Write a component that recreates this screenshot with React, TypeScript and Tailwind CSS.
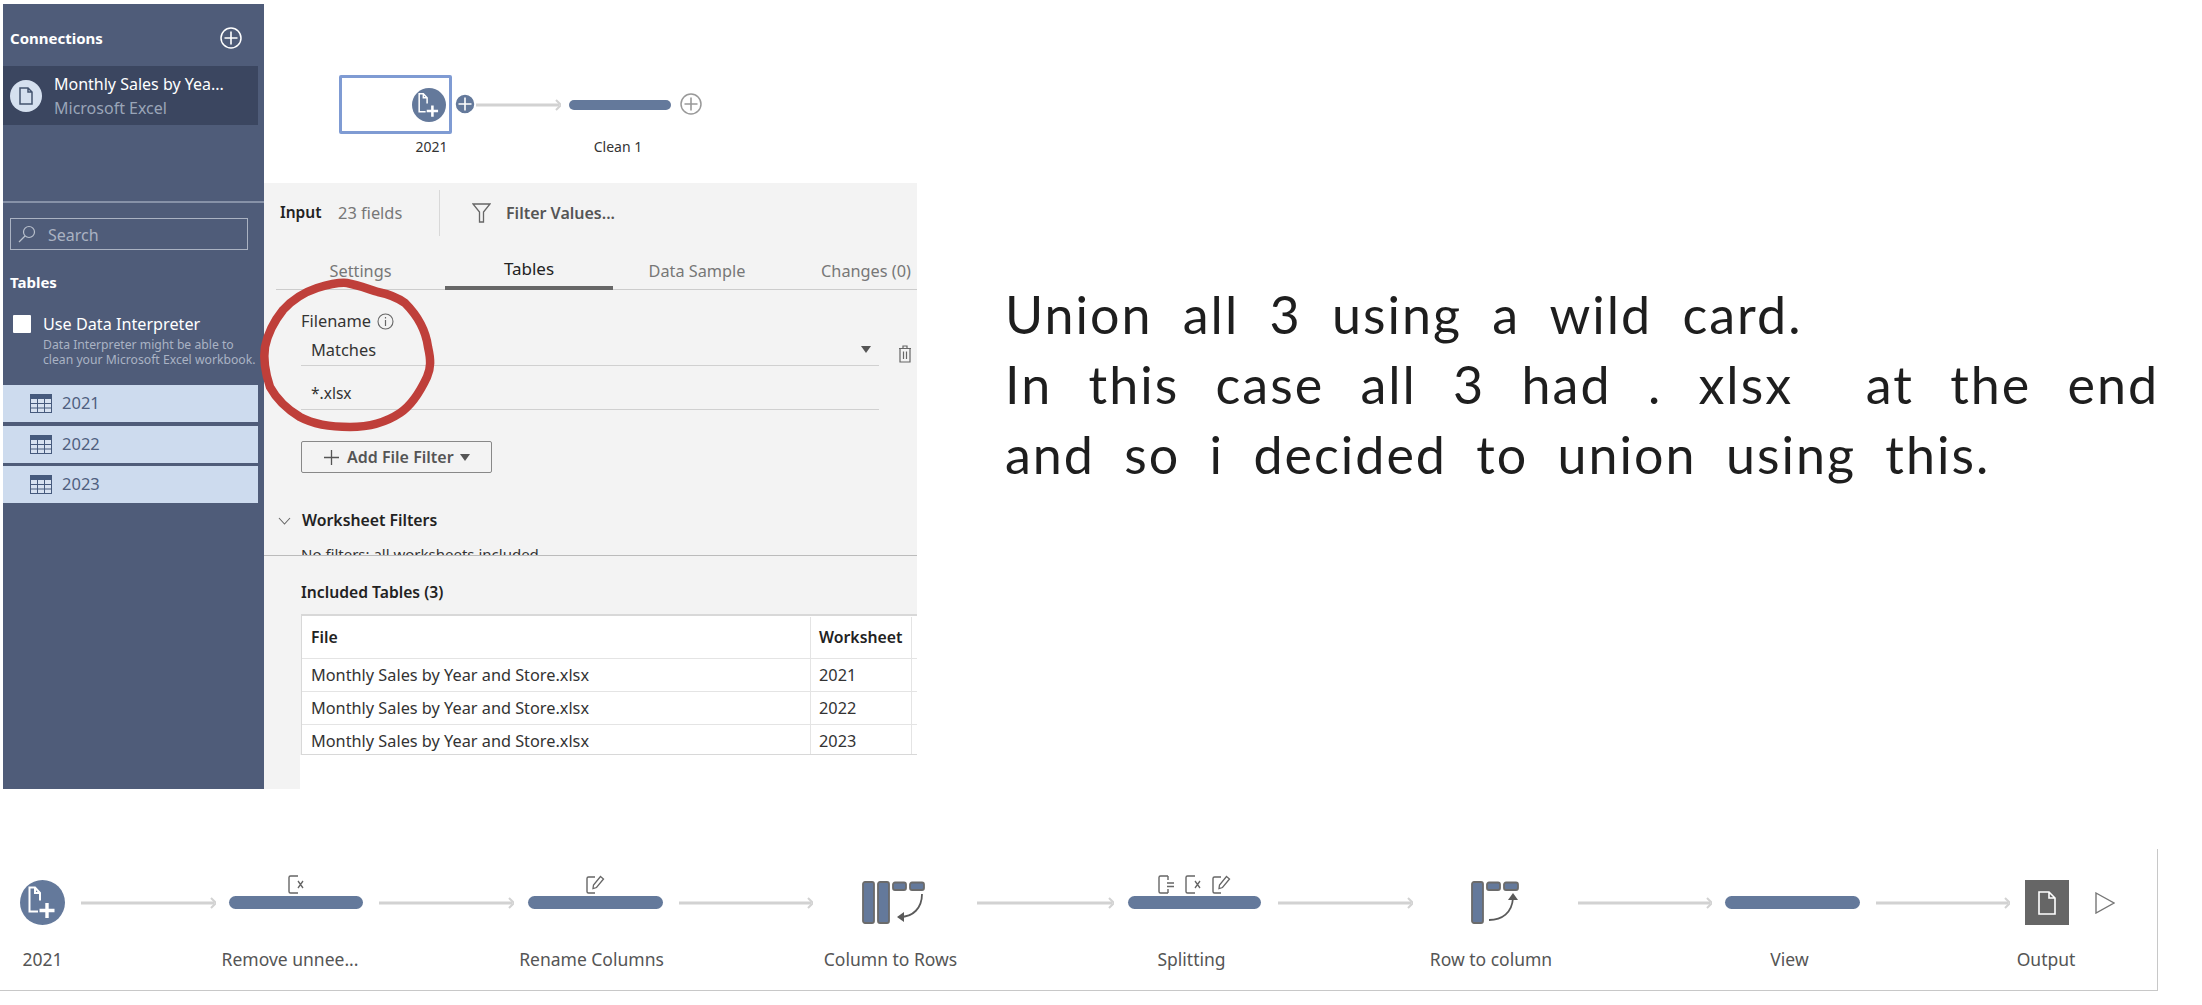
import React from "react";

const BLUE = "#64799b";

function PlusCircle({ size = 22, fill = "none", stroke = "#fff" }: { size?: number; fill?: string; stroke?: string }) {
  return (
    <svg width={size} height={size} viewBox="0 0 22 22" className="shrink-0">
      <circle cx="11" cy="11" r="10" fill={fill} stroke={stroke} strokeWidth="1.5" />
      <path d="M11 4.5v13M4.5 11h13" stroke={stroke} strokeWidth="1.6" />
    </svg>
  );
}

function FileAdd({ size }: { size: number }) {
  return (
    <svg width={size} height={size} viewBox="0 0 45 45" className="shrink-0">
      <circle cx="22.5" cy="22.5" r="22.5" fill={BLUE} />
      <path d="M20 20.5V13l-5-5.5H9.5v24H18M15 7.5V13h5" fill="none" stroke="#fff" strokeWidth="2" />
      <path d="M27 23v15M19.5 30.5h15" stroke="#fff" strokeWidth="3.4" />
    </svg>
  );
}

function Arrow({ w }: { w: number }) {
  return (
    <svg width={w} height="14" viewBox={`0 0 ${w} 14`} className="shrink-0">
      <path d={`M0 7H${w - 2}`} stroke="#d2d2d2" strokeWidth="3.2" />
      <path d={`M${w - 5} 2l5 5-5 5`} fill="none" stroke="#d2d2d2" strokeWidth="2" />
    </svg>
  );
}

function DocX() {
  return (
    <svg width="17" height="19" viewBox="0 0 17 19" className="shrink-0">
      <path d="M10 1H2.5A1.5 1.5 0 0 0 1 2.5v14A1.5 1.5 0 0 0 2.5 18H10" fill="none" stroke="#666" strokeWidth="1.4" />
      <path d="M10 6l5 7M15 6l-5 7" stroke="#666" strokeWidth="1.3" />
    </svg>
  );
}
function DocEdit() {
  return (
    <svg width="19" height="19" viewBox="0 0 19 19" className="shrink-0">
      <path d="M9 2H2.5A1.5 1.5 0 0 0 1 3.5v13A1.5 1.5 0 0 0 2.5 18H9" fill="none" stroke="#666" strokeWidth="1.4" />
      <path d="M14.5 1.5l3 2.5-7 8.5-3.5 1 .5-3.5z" fill="none" stroke="#666" strokeWidth="1.3" />
    </svg>
  );
}
function DocLines() {
  return (
    <svg width="17" height="19" viewBox="0 0 17 19" className="shrink-0">
      <path d="M10 1H2.5A1.5 1.5 0 0 0 1 2.5v14A1.5 1.5 0 0 0 2.5 18H10" fill="none" stroke="#666" strokeWidth="1.4" />
      <path d="M10 1v4M10 14v4M9 8h7M9 11.5h7" stroke="#666" strokeWidth="1.4" />
    </svg>
  );
}

function ColsToRows() {
  return (
    <svg width="63" height="43" viewBox="0 0 63 43" className="shrink-0">
      <rect x="1" y="1" width="11" height="41" rx="2" fill={BLUE} stroke="#6b6b6b" strokeWidth="1.8" />
      <rect x="16" y="1" width="11" height="41" rx="2" fill={BLUE} stroke="#6b6b6b" strokeWidth="1.8" />
      <rect x="31" y="1.5" width="13" height="7.5" rx="2" fill={BLUE} stroke="#6b6b6b" strokeWidth="1.8" />
      <rect x="48" y="1.5" width="14" height="7.5" rx="2" fill={BLUE} stroke="#6b6b6b" strokeWidth="1.8" />
      <path d="M60 13c0 14-9 23-22 23" fill="none" stroke="#5a5a5a" strokeWidth="1.8" />
      <path d="M35 36l7-5v10z" fill="#5a5a5a" />
    </svg>
  );
}

function RowsToCols() {
  return (
    <svg width="48" height="43" viewBox="0 0 48 43" className="shrink-0">
      <rect x="1" y="1" width="11" height="41" rx="2" fill={BLUE} stroke="#6b6b6b" strokeWidth="1.8" />
      <rect x="16" y="1.5" width="13" height="7.5" rx="2" fill={BLUE} stroke="#6b6b6b" strokeWidth="1.8" />
      <rect x="33" y="1.5" width="14" height="7.5" rx="2" fill={BLUE} stroke="#6b6b6b" strokeWidth="1.8" />
      <path d="M18 39c13 0 23-7 24-22" fill="none" stroke="#5a5a5a" strokeWidth="1.8" />
      <path d="M42 12l5 7H37z" fill="#5a5a5a" />
    </svg>
  );
}

function Pill({ w, icons }: { w: number; icons?: React.ReactNode }) {
  return (
    <div className="relative h-[13px] rounded-full bg-[#64799b]" style={{ width: w }}>
      {icons && <div className="absolute bottom-[15px] left-0 right-0 flex items-center justify-center gap-[10px]">{icons}</div>}
    </div>
  );
}

function Node({ label, w, dx = 0, children }: { label: string; w: number; dx?: number; children: React.ReactNode }) {
  return (
    <div className="flex shrink-0 flex-col items-center" style={{ width: w }}>
      <div className="flex h-[45px] items-center">{children}</div>
      <div className="mt-[22px] h-[24px] whitespace-nowrap text-[17.5px] leading-[24px] text-[#555]" style={{ marginLeft: dx * 2 }}>
        {label}
      </div>
    </div>
  );
}

function Link({ w, ml }: { w: number; ml: number }) {
  return (
    <div className="flex h-[45px] shrink-0 items-center" style={{ width: w, marginLeft: ml }}>
      <Arrow w={w} />
    </div>
  );
}

function TableIcon() {
  return (
    <svg width="22" height="19" viewBox="0 0 22 19" className="shrink-0">
      <rect x="0.5" y="0.5" width="21" height="18" fill="#d8e2f1" stroke="#465a7d" />
      <rect x="0.5" y="0.5" width="21" height="4.5" fill="#465a7d" />
      <path d="M0 9.5h22M0 14h22M7.5 5v14M14.5 5v14" stroke="#465a7d" strokeWidth="1" />
    </svg>
  );
}

function TableRow({ year }: { year: string }) {
  return (
    <div className="flex h-[37px] w-[255px] items-center bg-[#cddbee] pl-[27px] text-[16.5px] text-[#4f5f7f]">
      <TableIcon />
      <span className="ml-[10px]">{year}</span>
    </div>
  );
}

function Sidebar() {
  return (
    <aside className="flex h-[785px] w-[261px] shrink-0 flex-col bg-[#4f5c79]">
      <div className="flex h-[62px] items-center justify-between pl-[7px] pr-[22px] pt-[6px]">
        <span className="text-[15px] font-bold text-white">Connections</span>
        <PlusCircle />
      </div>
      <div className="flex h-[59px] w-[255px] items-center bg-[#3b4660] pl-[7px]">
        <div className="flex h-[32px] w-[32px] items-center justify-center rounded-full bg-[#d5e0ef]">
          <svg width="14" height="18" viewBox="0 0 14 18">
            <path d="M1 1h8l4 4v12H1zM9 1v4h4" fill="none" stroke="#43536f" strokeWidth="1.5" />
          </svg>
        </div>
        <div className="ml-[12px] flex flex-col">
          <span className="text-[16px] leading-[24px] text-white">Monthly Sales by Yea...</span>
          <span className="text-[16px] leading-[24px] text-[#9aa5b8]">Microsoft Excel</span>
        </div>
      </div>
      <div className="mt-[76px] h-[2px] bg-[#8792a8]" />
      <div className="ml-[7px] mt-[15px] flex h-[32px] w-[238px] items-center border border-[#aab2c2] pl-[7px]">
        <svg width="18" height="18" viewBox="0 0 18 18" className="shrink-0">
          <circle cx="11" cy="7" r="5.5" fill="none" stroke="#b9c0cd" strokeWidth="1.2" />
          <path d="M7 11l-6 6" stroke="#b9c0cd" strokeWidth="1.2" />
        </svg>
        <span className="ml-[12px] pt-[2px] text-[16px] leading-[22px] text-[#aab2c2]">Search</span>
      </div>
      <div className="ml-[7px] mt-[21px] text-[15px] font-bold leading-[22px] text-white">Tables</div>
      <div className="ml-[10px] mt-[22px] flex items-center">
        <div className="h-[18px] w-[18px] rounded-[1px] bg-white" />
        <span className="ml-[12px] text-[16.2px] leading-[18px] text-white">Use Data Interpreter</span>
      </div>
      <div className="ml-[40px] mt-[5px] whitespace-nowrap text-[12.2px] leading-[14.5px] text-[#aab3c4]">
        Data Interpreter might be able to
        <br />
        clean your Microsoft Excel workbook.
      </div>
      <div className="mt-[18px] flex flex-col gap-[3.5px]">
        <TableRow year="2021" />
        <TableRow year="2022" />
        <TableRow year="2023" />
      </div>
    </aside>
  );
}

function Canvas() {
  return (
    <div className="flex h-[179px] items-start pl-[75px] pt-[71px]">
      <div className="flex flex-col">
        <div className="flex h-[59px] w-[113px] items-center justify-end rounded-[2px] border-[3px] border-[#7f9bd3] bg-white pr-[3px]">
          <FileAdd size={34} />
        </div>
        <div className="mt-[4px] pl-[72px] text-center text-[14px] leading-[18px] text-[#333]">2021</div>
      </div>
      <div className="flex h-[59px] items-center">
        <div className="mb-[2px] ml-[2px]">
          <PlusCircle fill={BLUE} stroke="#fff" />
        </div>
        <Arrow w={85} />
      </div>
      <div className="ml-[8px] flex w-[102px] flex-col items-center">
        <div className="flex h-[59px] items-center">
          <div className="h-[10px] w-[102px] rounded-full bg-[#64799b]" />
        </div>
        <div className="mt-[4px] pr-[4px] text-[14px] leading-[18px] text-[#333]">Clean 1</div>
      </div>
      <div className="mb-[2px] ml-[9px] flex h-[57px] items-center">
        <PlusCircle fill="#fff" stroke="#999" />
      </div>
    </div>
  );
}

function Tab({ label, w, active }: { label: string; w: number; active?: boolean }) {
  return (
    <div
      className={`flex h-[38px] shrink-0 items-center justify-center whitespace-nowrap ${
        active ? "border-b-[4px] border-[#666] text-[17px] text-[#222]" : "pt-[1px] text-[16.3px] text-[#777]"
      }`}
      style={{ width: w }}
    >
      {label}
    </div>
  );
}

function Tri({ className = "" }: { className?: string }) {
  return (
    <svg width="10" height="7" viewBox="0 0 10 7" className={`shrink-0 ${className}`}>
      <path d="M0 0h10L5 7z" fill="#555" />
    </svg>
  );
}

function Row({ year, head }: { year: string; head?: string }) {
  return (
    <div className={`flex border-b border-[#e4e4e4] ${head ? "h-[43px] pt-[1px] text-[15.8px] font-semibold text-[#222]" : "h-[33px] text-[16.3px] text-[#333]"}`}>
      <div className="flex w-[509px] shrink-0 items-center border-r border-[#e4e4e4] pl-[9px]">
        {head ?? "Monthly Sales by Year and Store.xlsx"}
      </div>
      <div className="flex w-[101px] shrink-0 items-center border-r border-[#e4e4e4] pl-[8px]">{year}</div>
    </div>
  );
}

function Panel() {
  return (
    <div className="flex w-[653px] flex-col">
      <div className="h-[373px] overflow-hidden border-b border-[#bbb] bg-[#f3f3f3]">
        <div className="flex h-[60px] items-center pl-[16px]">
          <span className="w-[58px] text-[15.5px] font-semibold text-[#222]">Input</span>
          <span className="w-[101px] text-[16.4px] text-[#777]">23 fields</span>
          <div className="h-[46px] w-px bg-[#d8d8d8]" />
          <svg width="19" height="20" viewBox="0 0 19 20" className="ml-[32px] shrink-0">
            <path d="M1 1h17l-6.5 8v10h-4V9z" fill="none" stroke="#666" strokeWidth="1.3" />
          </svg>
          <span className="ml-[15px] text-[16px] font-semibold text-[#555]">Filter Values...</span>
        </div>
        <div className="ml-[12px] mt-[9px] flex h-[38px] border-b border-[#ccc]">
          <Tab label="Settings" w={169} />
          <Tab label="Tables" w={168} active />
          <Tab label="Data Sample" w={168} />
          <Tab label="Changes (0)" w={170} />
        </div>
        <div className="ml-[37px] mt-[21px] flex h-[20px] items-center text-[16.4px] text-[#333]">
          Filename
          <svg width="17" height="17" viewBox="0 0 17 17" className="ml-[6px]">
            <circle cx="8.5" cy="8.5" r="7.5" fill="none" stroke="#666" strokeWidth="1.1" />
            <path d="M8.5 7v6M8.5 4v1.6" stroke="#666" strokeWidth="1.2" />
          </svg>
        </div>
        <div className="mt-[3px] flex items-start">
          <div className="ml-[37px] w-[578px]">
            <div className="flex h-[32px] items-center border-b border-[#d0d0d0] pl-[10px] pr-[8px] text-[16.4px] text-[#333]">
              <span className="flex-1 pb-[1px] pt-[2px]">Matches</span>
              <Tri />
            </div>
            <div className="mt-[12px] flex h-[32px] items-center border-b border-[#d0d0d0] pl-[10px] text-[15.5px] text-[#333]">*.xlsx</div>
          </div>
          <svg width="14" height="18" viewBox="0 0 14 18" className="ml-[19px] mt-[11px] shrink-0">
            <path d="M1 3.5h12M5 3.5V1h4v2.5M2 3.5V17h10V3.5M5.5 6.5v7.5M8.5 6.5v7.5" fill="none" stroke="#666" strokeWidth="1.2" />
          </svg>
        </div>
        <div className="ml-[37px] mt-[31px] flex h-[32px] w-[191px] items-center rounded-[2px] border border-[#888] pl-[22px]">
          <svg width="15" height="15" viewBox="0 0 15 15">
            <path d="M7.5 0v15M0 7.5h15" stroke="#555" strokeWidth="1.3" />
          </svg>
          <span className="ml-[8px] whitespace-nowrap text-[16px] font-semibold leading-[22px] text-[#555]">Add File Filter</span>
          <Tri className="ml-[6px]" />
        </div>
        <div className="mt-[37px] flex h-[22px] items-center pl-[14px]">
          <svg width="13" height="8" viewBox="0 0 13 8">
            <path d="M1 1l5.5 6L12 1" fill="none" stroke="#666" strokeWidth="1.1" />
          </svg>
          <span className="ml-[11px] text-[15.8px] font-semibold text-[#222]">Worksheet Filters</span>
        </div>
        <div className="ml-[37px] mt-[11px] whitespace-nowrap text-[15px] leading-[22px] text-[#333]">No filters: all worksheets included</div>
      </div>
      <div className="flex h-[199px] flex-col bg-[#f3f3f3] pl-[37px]">
        <div className="mt-[25px] h-[22px] text-[15.7px] font-semibold leading-[22px] text-[#222]">Included Tables (3)</div>
        <div className="mt-[11px] flex-1 overflow-hidden border-b border-t-2 border-[#d8d8d8] border-l border-l-[#d8d8d8] bg-white">
          <Row year="Worksheet" head="File" />
          <Row year="2021" />
          <Row year="2022" />
          <div className="flex h-[32px] text-[16.3px] text-[#333]">
            <div className="flex w-[509px] shrink-0 items-center border-r border-[#e4e4e4] pl-[9px]">Monthly Sales by Year and Store.xlsx</div>
            <div className="flex w-[101px] shrink-0 items-center border-r border-[#e4e4e4] pl-[8px]">2023</div>
          </div>
        </div>
      </div>
      <div className="h-[34px] w-[36px] bg-[#f3f3f3]" />
    </div>
  );
}

function Note() {
  return (
    <div className="ml-[88px] mt-[275px] whitespace-pre font-['Lato',sans-serif] text-[52px] leading-[70px] tracking-[2px] text-[#1e1e1e]">
      <div className="[word-spacing:15px]">Union all 3 using a wild card.</div>
      <div className="[word-spacing:21px]">In this case all 3 had . xlsx  at the end</div>
      <div className="[word-spacing:14px]">and so i decided to union using this.</div>
    </div>
  );
}

function Strip() {
  return (
    <div className="flex h-[142px] w-[2158px] items-start border-b border-r border-[#c8c8c8] pl-[20px] pt-[31px]">
      <Node label="2021" w={45}>
        <FileAdd size={45} />
      </Node>
      <Link w={135} ml={16} />
      <div className="ml-[13px]">
        <Node label="Remove unnee..." w={134} dx={-6}>
          <Pill w={134} icons={<DocX />} />
        </Node>
      </div>
      <Link w={135} ml={16} />
      <div className="ml-[14px]">
        <Node label="Rename Columns" w={135} dx={-4}>
          <Pill w={135} icons={<DocEdit />} />
        </Node>
      </div>
      <Link w={134} ml={16} />
      <div className="ml-[49px]">
        <Node label="Column to Rows" w={63} dx={-3}>
          <ColsToRows />
        </Node>
      </div>
      <Link w={137} ml={52} />
      <div className="ml-[14px]">
        <Node label="Splitting" w={133} dx={-3}>
          <Pill
            w={133}
            icons={
              <>
                <DocLines />
                <DocX />
                <DocEdit />
              </>
            }
          />
        </Node>
      </div>
      <Link w={135} ml={17} />
      <div className="ml-[58px]">
        <Node label="Row to column" w={48} dx={-4}>
          <RowsToCols />
        </Node>
      </div>
      <Link w={134} ml={59} />
      <div className="ml-[13px]">
        <Node label="View" w={135} dx={-3}>
          <Pill w={135} />
        </Node>
      </div>
      <Link w={134} ml={16} />
      <div className="ml-[15px]">
        <Node label="Output" w={44} dx={-1}>
          <div className="flex h-[45px] w-[44px] items-center justify-center bg-[#666]">
            <svg width="18" height="24" viewBox="0 0 18 24">
              <path d="M1 1h10l6 6v16H1zM11 1v6h6" fill="none" stroke="#fff" strokeWidth="1.6" />
            </svg>
          </div>
        </Node>
      </div>
      <div className="ml-[26px] flex h-[45px] items-center">
        <svg width="20" height="22" viewBox="0 0 20 22">
          <path d="M1 1l18 10L1 21z" fill="none" stroke="#777" strokeWidth="1.4" />
        </svg>
      </div>
    </div>
  );
}

export default function App() {
  return (
    <div className="relative h-[1005px] w-[2202px] overflow-hidden bg-white font-['Noto_Sans',sans-serif]">
      <div className="flex h-[849px] pl-[3px] pt-[4px]">
        <Sidebar />
        <div>
          <Canvas />
          <Panel />
        </div>
        <Note />
      </div>
      <Strip />
      <svg className="pointer-events-none absolute left-[255px] top-[275px]" width="185" height="162" viewBox="255 275 185 162">
        <path
          d="M347 283C358 285 368 289 378 292C388 294 398 298 405 303C418 316 426 332 428 347C431 360 431 368 427 377C420 392 412 405 400 413C385 423 368 427 350 427C332 427 315 425 300 417C285 408 276 398 270 387C265 372 263 360 265 347C268 332 275 320 283 310C292 300 305 292 317 288C327 285 337 282 347 283"
          fill="none"
          stroke="#bf3f3a"
          strokeWidth="8.5"
          strokeLinecap="round"
        />
      </svg>
    </div>
  );
}
